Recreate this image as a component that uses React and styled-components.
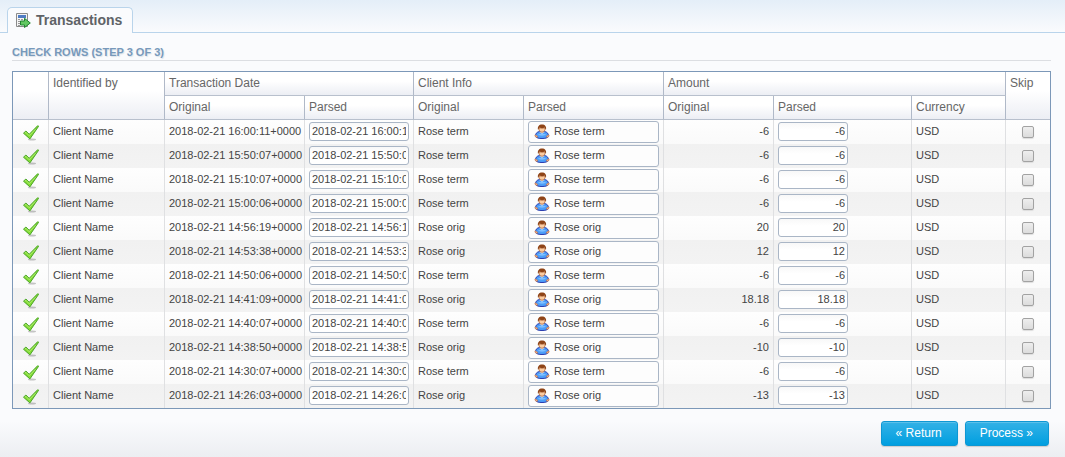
import React, { useState } from "react";
import styled, { createGlobalStyle } from "styled-components";

const GlobalStyle = createGlobalStyle`
  * {
    box-sizing: border-box;
  }

  html {
    min-height: 100%;
    background: #fafbfd;
  }

  body {
    margin: 0;
    font-family: "Liberation Sans", Arial, sans-serif;
    font-size: 11px;
    color: #444;
  }
`;

const Page = styled.div`
  min-height: 100vh;
  background: linear-gradient(to top, #eceef2 0, #fafbfd 36px);
`;

const TabBar = styled.nav`
  display: flex;
  padding: 7px 7px 0;
  border-bottom: 1px solid #b9d4eb;
  background: linear-gradient(#e4eef8, #fafbfd);
`;

const Tab = styled.a`
  display: flex;
  align-items: center;
  gap: 5px;
  height: 26px;
  margin-bottom: -1px;
  padding: 0 10px 1px 7px;
  border: 1px solid #b9d4eb;
  border-bottom: 0;
  border-radius: 5px 5px 0 0;
  background: #fafbfd;
  color: #5f6367;
  font-size: 14px;
  font-weight: bold;
  text-decoration: none;
`;

const Content = styled.main`
  padding: 12px 14px 11px 12px;
`;

const Title = styled.h1`
  margin: 0 0 10px;
  padding-bottom: 1px;
  border-bottom: 1px solid #dcdee2;
  color: #7799bb;
  font-size: 11px;
  line-height: 14px;
  text-transform: uppercase;
  text-shadow: 1px 1px 1px #dde2e8;
`;

const Table = styled.table`
  width: 100%;
  table-layout: fixed;
  border: 1px solid #7c98b8;
  border-collapse: separate;
  border-spacing: 0;
`;

const HeadCell = styled.th`
  height: 24px;
  padding: 4px 4px 5px;
  border-right: 1px solid #b0b9c8;
  border-bottom: 1px solid #b8c0cd;
  background: linear-gradient(#fff 40%, #eceef4);
  color: #666;
  font-size: 12px;
  font-weight: normal;
  line-height: 14px;
  text-align: left;
  vertical-align: top;

  &.last {
    border-right: 0;
  }
`;

const Row = styled.tr`
  background: linear-gradient(#fefefe, #fafafa);

  &:nth-child(even) {
    background: linear-gradient(#f1f1f1, #f3f3f3);
  }
`;

const Cell = styled.td`
  height: 24px;
  padding: 0 4px 1px;
  border-right: 1px solid #dfe0e2;
  line-height: 13px;
  text-align: ${(props) => props.$align || "left"};
  white-space: nowrap;

  &:last-child {
    padding-right: 5px;
    border-right: 0;
  }
`;

const Field = styled.input`
  display: block;
  width: ${(props) => props.$width || "100%"};
  height: 19px;
  padding: 0 2px 2px;
  border: 1px solid #aab6c6;
  border-radius: 3px;
  background: linear-gradient(#f8f8f8, #fff 40%);
  color: #444;
  font: inherit;
  text-align: ${(props) => props.$align || "left"};
`;

const ClientButton = styled.button`
  display: flex;
  align-items: center;
  gap: 4px;
  width: 131px;
  max-width: 100%;
  height: 22px;
  margin-top: 1px;
  padding: 0 5px 1px;
  border: 1px solid #aab6c6;
  border-radius: 3px;
  background: #fdfdfd;
  color: #444;
  font: inherit;
`;

const Checkbox = styled.input`
  appearance: none;
  display: block;
  width: 12px;
  height: 12px;
  margin: 1px auto 0;
  border: 1px solid #a2a2a2;
  border-radius: 2px;
  background: linear-gradient(#eee, #dcdcdc);
  box-shadow: 0 1px 1px #ddd;

  &:checked {
    background: #4a90d0;
  }
`;

const Status = styled.svg`
  display: block;
  margin: 2px auto 0;
`;

const Actions = styled.footer`
  display: flex;
  justify-content: flex-end;
  gap: 7px;
  padding: 1px 16px 11px;
`;

const ActionButton = styled.button`
  height: 25px;
  padding: 0 15px 2px 14px;
  border: 1px solid #0e97d3;
  border-radius: 3px;
  background: linear-gradient(#33b1e6, #009fe0);
  box-shadow: inset 0 1px 0 #5cc0ea, 0 1px 1px #ccc;
  color: #fff;
  font-family: inherit;
  font-size: 12px;
  cursor: pointer;
`;

const columnWidths = [36, 116, 140, 109, 110, 140, 110, 138, 94, 44];

const transactions = [
  { date: "2018-02-21 16:00:11", client: "Rose term", amount: "-6" },
  { date: "2018-02-21 15:50:07", client: "Rose term", amount: "-6" },
  { date: "2018-02-21 15:10:07", client: "Rose term", amount: "-6" },
  { date: "2018-02-21 15:00:06", client: "Rose term", amount: "-6" },
  { date: "2018-02-21 14:56:19", client: "Rose orig", amount: "20" },
  { date: "2018-02-21 14:53:38", client: "Rose orig", amount: "12" },
  { date: "2018-02-21 14:50:06", client: "Rose term", amount: "-6" },
  { date: "2018-02-21 14:41:09", client: "Rose orig", amount: "18.18" },
  { date: "2018-02-21 14:40:07", client: "Rose term", amount: "-6" },
  { date: "2018-02-21 14:38:50", client: "Rose orig", amount: "-10" },
  { date: "2018-02-21 14:30:07", client: "Rose term", amount: "-6" },
  { date: "2018-02-21 14:26:03", client: "Rose orig", amount: "-13" },
];

const ImportIcon = () => (
  <svg width="16" height="16" viewBox="0 0 16 16" aria-hidden="true">
    <path d="M1.5 1.5h11v13h-11z" fill="#f4f4f4" stroke="#8a8a8a" />
    <path d="M3 3h8v3H3z" fill="#4f7cc4" />
    <path
      d="M3 7h2v1H3zM6 7h2v1H6zM9 7h2v1H9zM3 9h2v1H3zM3 11h2v1H3zM3 13h2v1H3z"
      fill="#999"
    />
    <path
      d="M5.5 9h4V6.300L15.300 11l-5.800 4.500V13h-4z"
      fill="#62c862"
      stroke="#1f8430"
      strokeLinejoin="round"
    />
  </svg>
);

const CheckIcon = () => (
  <Status width="16" height="16" viewBox="0 0 16 16" role="img" aria-label="OK">
    <ellipse cx="9" cy="14.500" rx="4" ry="1" fill="#000" opacity="0.22" />
    <path
      d="M.5 8.200 2.900 6 6.200 9.300 14.800.6l.8.7L6.900 13.900z"
      fill="#84dc35"
      stroke="#4ba42a"
      strokeLinejoin="round"
    />
    <path
      d="M1.900 8.200 2.900 7.300 6.200 10.700 12.500 4.200"
      fill="none"
      stroke="#b9f07a"
      strokeWidth="0.8"
    />
  </Status>
);

const PersonIcon = () => (
  <svg width="16" height="16" viewBox="0 0 16 16" aria-hidden="true">
    <path
      d="M1.500 12.500C1.300 9.600 2.800 8 5.500 7.500h5c2.700.5 4.200 2.100 4 5C13.500 14 11 14.500 8 14.500S2.500 14 1.500 12.500z"
      fill="#4d9df8"
      stroke="#2a3cae"
    />
    <path d="M4 10.500c2-1 6-1 8 0-1 1.500-7 1.500-8 0z" fill="#7fc0ff" />
    <path d="M5.500 8h5L8 9.800z" fill="#e3f0ff" />
    <path
      d="M.8 11.200c1.200-.4 2.500.3 2.900 1.800-1.200.7-2.700.3-2.900-1.800zM15.200 11.200c-1.200-.4-2.500.3-2.900 1.800 1.200.7 2.700.3 2.900-1.800z"
      fill="#f7b488"
      stroke="#b5653a"
      strokeWidth="0.5"
    />
    <path
      d="M4.800 4C4.800 6.800 6 8.200 8 8.200S11.200 6.800 11.200 4z"
      fill="#fbcba0"
      stroke="#b0683a"
      strokeWidth="0.8"
    />
    <path
      d="M4 5.800C3.300 2.300 5 .4 8 .4s4.700 1.900 4 5.400C11.300 5 11 4.200 10.600 3.600 8.800 4.400 7 4.200 5.600 3.600 5 4.200 4.700 5 4 5.800z"
      fill="#8f4417"
    />
  </svg>
);

const TransactionRow = ({ transaction }) => {
  const { client, amount } = transaction;
  const [date, setDate] = useState(transaction.date);
  const [parsedAmount, setParsedAmount] = useState(amount);

  return (
    <Row>
      <Cell>
        <CheckIcon />
      </Cell>
      <Cell>Client Name</Cell>
      <Cell>{transaction.date}+0000</Cell>
      <Cell>
        <Field
          type="text"
          aria-label="Parsed date"
          value={date}
          onChange={(event) => setDate(event.target.value)}
        />
      </Cell>
      <Cell>{client}</Cell>
      <Cell>
        <ClientButton type="button">
          <PersonIcon />
          {client}
        </ClientButton>
      </Cell>
      <Cell $align="right">{amount}</Cell>
      <Cell>
        <Field
          type="text"
          aria-label="Parsed amount"
          $width="70px"
          $align="right"
          value={parsedAmount}
          onChange={(event) => setParsedAmount(event.target.value)}
        />
      </Cell>
      <Cell>USD</Cell>
      <Cell>
        <Checkbox type="checkbox" aria-label="Skip" />
      </Cell>
    </Row>
  );
};

const App = () => {
  return (
    <Page>
      <GlobalStyle />
      <TabBar>
        <Tab href="#transactions">
          <ImportIcon />
          Transactions
        </Tab>
      </TabBar>
      <Content>
        <Title>Check rows (step 3 of 3)</Title>
        <Table>
          <colgroup>
            {columnWidths.map((width, index) => (
              <col key={index} width={width} />
            ))}
          </colgroup>
          <thead>
            <tr>
              <HeadCell rowSpan={2} />
              <HeadCell rowSpan={2}>Identified by</HeadCell>
              <HeadCell colSpan={2}>Transaction Date</HeadCell>
              <HeadCell colSpan={2}>Client Info</HeadCell>
              <HeadCell colSpan={3}>Amount</HeadCell>
              <HeadCell rowSpan={2} className="last">
                Skip
              </HeadCell>
            </tr>
            <tr>
              <HeadCell>Original</HeadCell>
              <HeadCell>Parsed</HeadCell>
              <HeadCell>Original</HeadCell>
              <HeadCell>Parsed</HeadCell>
              <HeadCell>Original</HeadCell>
              <HeadCell>Parsed</HeadCell>
              <HeadCell>Currency</HeadCell>
            </tr>
          </thead>
          <tbody>
            {transactions.map((transaction) => (
              <TransactionRow key={transaction.date} transaction={transaction} />
            ))}
          </tbody>
        </Table>
      </Content>
      <Actions>
        <ActionButton type="button">« Return</ActionButton>
        <ActionButton type="button">Process »</ActionButton>
      </Actions>
    </Page>
  );
};

export default App;
